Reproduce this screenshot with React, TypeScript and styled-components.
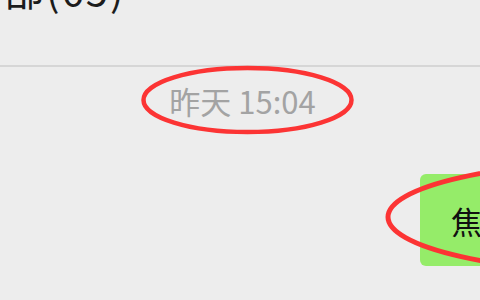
import React from "react";
import styled, { createGlobalStyle } from "styled-components";

const Global = createGlobalStyle`
  html, body { margin: 0; padding: 0; background: #ededed; }
  body { width: 480px; height: 300px; overflow: hidden; font-family: "Noto Sans CJK SC", "Noto Sans", sans-serif; }
  #root { width: 480px; height: 300px; }
`;

const Page = styled.div`
  position: relative;
  width: 480px;
  height: 300px;
  overflow: hidden;
  background: #ededed;
  display: flex;
  flex-direction: column;
`;

const Header = styled.header`
  height: 65px;
  flex: none;
  border-bottom: 2px solid #d6d6d6;
  box-sizing: content-box;
  overflow: hidden;
  display: flex;
  align-items: flex-start;
`;

const Title = styled.h1`
  margin: -31px 0 0 -38px;
  font-size: 40px;
  line-height: 40px;
  font-weight: 400;
  letter-spacing: 2px;
  color: #1c1c1c;
  white-space: nowrap;
`;

const Chat = styled.main`
  flex: 1;
  display: flex;
  flex-direction: column;
`;

const TimeRow = styled.div`
  display: flex;
  justify-content: center;
  padding: 18px 0 0 5px;
`;

const Time = styled.span`
  font-size: 31px;
  line-height: 32px;
  color: #a3a3a3;
  white-space: nowrap;
`;

const MsgRow = styled.div`
  display: flex;
  justify-content: flex-end;
  margin-top: 57px;
`;

const Bubble = styled.div`
  background: #95ec69;
  border-radius: 6px;
  height: 92px;
  padding: 0 32px 0 31px;
  margin-right: -34px;
  display: flex;
  align-items: center;
  font-size: 31px;
  color: #111;
  white-space: nowrap;
`;

const Overlay = styled.svg`
  position: absolute;
  left: 0;
  top: 0;
  pointer-events: none;
`;

export default function App() {
  return (
    <>
      <Global />
      <Page>
        <Header>
          <Title>全部(65)</Title>
        </Header>
        <Chat>
          <TimeRow>
            <Time>昨天 15:04</Time>
          </TimeRow>
          <MsgRow>
            <Bubble>焦</Bubble>
          </MsgRow>
        </Chat>
        <Overlay width="480" height="300" viewBox="0 0 480 300">
          <ellipse cx="247.5" cy="100" rx="104" ry="32" fill="none" stroke="#fc3434" strokeWidth="4.5" />
          <ellipse cx="638" cy="217" rx="250" ry="56" fill="none" stroke="#fc3434" strokeWidth="5" />
        </Overlay>
      </Page>
    </>
  );
}
